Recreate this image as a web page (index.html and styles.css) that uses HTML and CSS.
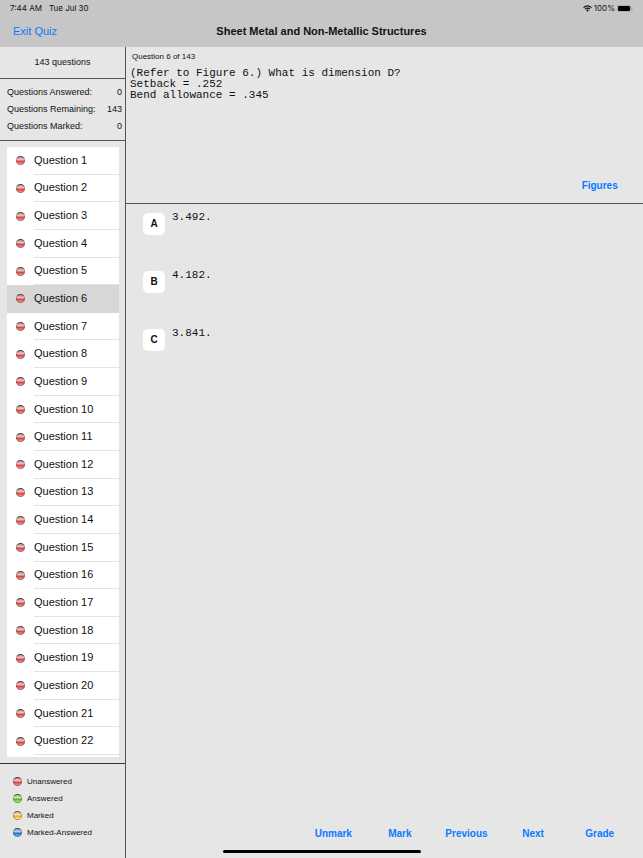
FILE: index.html
```html
<!DOCTYPE html>
<html lang="en">
<head>
<meta charset="utf-8">
<meta name="viewport" content="width=device-width, initial-scale=1">
<title>Sheet Metal and Non-Metallic Structures</title>
<link rel="stylesheet" href="styles.css">
</head>
<body>
<header class="top">
  <div class="status">
    <span>7:44 AM</span>
    <span>Tue Jul 30</span>
    <span class="status-right">
      <svg class="wifi" viewBox="0 0 18 14" aria-hidden="true"><g fill="none" stroke="#111" stroke-width="2.3"><path d="M1 5.2Q9-2 17 5.2"/><path d="M4 8.3Q9 4 14 8.3"/></g><path d="M6.2 10.4Q9 8 11.8 10.4L9 13.3Z" fill="#111"/></svg>
      <span>100%</span>
      <svg class="battery" viewBox="0 0 32 14" aria-hidden="true"><rect x=".5" y=".5" width="27" height="13" rx="4" fill="none" stroke="#888"/><rect x="2" y="2" width="24" height="10" rx="2.5" fill="#000"/><path d="M29 4.5q2 .8 2 2.5t-2 2.5z" fill="#888"/></svg>
    </span>
  </div>
  <nav class="navbar">
    <button class="exit" type="button">Exit Quiz</button>
    <h1>Sheet Metal and Non-Metallic Structures</h1>
  </nav>
</header>
<div class="body">
  <aside class="side">
    <p class="total">143 questions</p>
    <dl class="stats">
      <div><dt>Questions Answered:</dt><dd>0</dd></div>
      <div><dt>Questions Remaining:</dt><dd>143</dd></div>
      <div><dt>Questions Marked:</dt><dd>0</dd></div>
    </dl>
    <div class="list-wrap">
      <ul class="list">
        <li><i class="dot red"></i><button type="button">Question 1</button></li>
        <li><i class="dot red"></i><button type="button">Question 2</button></li>
        <li><i class="dot red"></i><button type="button">Question 3</button></li>
        <li><i class="dot red"></i><button type="button">Question 4</button></li>
        <li><i class="dot red"></i><button type="button">Question 5</button></li>
        <li class="current"><i class="dot red"></i><button type="button">Question 6</button></li>
        <li><i class="dot red"></i><button type="button">Question 7</button></li>
        <li><i class="dot red"></i><button type="button">Question 8</button></li>
        <li><i class="dot red"></i><button type="button">Question 9</button></li>
        <li><i class="dot red"></i><button type="button">Question 10</button></li>
        <li><i class="dot red"></i><button type="button">Question 11</button></li>
        <li><i class="dot red"></i><button type="button">Question 12</button></li>
        <li><i class="dot red"></i><button type="button">Question 13</button></li>
        <li><i class="dot red"></i><button type="button">Question 14</button></li>
        <li><i class="dot red"></i><button type="button">Question 15</button></li>
        <li><i class="dot red"></i><button type="button">Question 16</button></li>
        <li><i class="dot red"></i><button type="button">Question 17</button></li>
        <li><i class="dot red"></i><button type="button">Question 18</button></li>
        <li><i class="dot red"></i><button type="button">Question 19</button></li>
        <li><i class="dot red"></i><button type="button">Question 20</button></li>
        <li><i class="dot red"></i><button type="button">Question 21</button></li>
        <li><i class="dot red"></i><button type="button">Question 22</button></li>
      </ul>
    </div>
    <ul class="legend">
      <li><i class="dot red"></i>Unanswered</li>
      <li><i class="dot green"></i>Answered</li>
      <li><i class="dot amber"></i>Marked</li>
      <li><i class="dot blue"></i>Marked-Answered</li>
    </ul>
  </aside>
  <main class="main">
    <section class="prompt">
      <h2>Question 6 of 143</h2>
      <p class="text">(Refer to Figure 6.) What is dimension D?<br>Setback = .252<br>Bend allowance = .345</p>
      <div class="actions"><button class="link figures" type="button">Figures</button></div>
    </section>
    <ol class="answers">
      <li><button class="letter" type="button" aria-labelledby="key-a ans-a"><span id="key-a">A</span></button><span id="ans-a">3.492.</span></li>
      <li><button class="letter" type="button" aria-labelledby="key-b ans-b"><span id="key-b">B</span></button><span id="ans-b">4.182.</span></li>
      <li><button class="letter" type="button" aria-labelledby="key-c ans-c"><span id="key-c">C</span></button><span id="ans-c">3.841.</span></li>
    </ol>
    <div class="actions toolbar">
      <button class="link" type="button">Unmark</button>
      <button class="link" type="button">Mark</button>
      <button class="link" type="button">Previous</button>
      <button class="link" type="button">Next</button>
      <button class="link" type="button">Grade</button>
    </div>
  </main>
</div>
<div class="home-bar"></div>
</body>
</html>
```

FILE: styles.css
```css
* {
  box-sizing: border-box;
}

body {
  margin: 0;
  min-height: 100vh;
  display: flex;
  flex-direction: column;
  position: relative;
  background: #e6e6e6;
  color: #111;
  font: 9px/17px "Liberation Sans", Arial, sans-serif;
}

h1, h2, p, ul, ol, dl, dd {
  margin: 0;
  padding: 0;
  list-style: none;
}

button {
  border: 0;
  padding: 0;
  background: none;
  color: inherit;
  font: inherit;
  cursor: pointer;
}

.top {
  height: 47px;
  background: #c6c6c6;
}

.status {
  display: flex;
  gap: 7px;
  padding: 0 10px;
  height: 16px;
  font-family: Inter, "Liberation Sans", sans-serif;
  font-size: 8px;
  line-height: 16px;
}

.status-right {
  display: flex;
  align-items: center;
  gap: 2px;
  margin-left: auto;
}

.wifi {
  width: 9px;
  height: 7px;
}

.battery {
  width: 16px;
  height: 7px;
}

.navbar {
  display: grid;
  grid-template-columns: 1fr auto 1fr;
  align-items: center;
  height: 31px;
  padding: 0 13px;
}

.exit {
  justify-self: start;
  color: #0a7aff;
  font-size: 11px;
}

.navbar h1 {
  font-size: 11px;
  font-weight: 700;
}

.body {
  flex: 1;
  display: grid;
  grid-template-columns: 126px 1fr;
}

.side {
  display: flex;
  flex-direction: column;
  border-right: 1px solid #555;
}

.total {
  height: 32px;
  line-height: 31px;
  text-align: center;
  border-bottom: 1px solid #555;
}

.stats {
  padding: 5px 3px 5px 7px;
  border-bottom: 1px solid #555;
}

.stats div {
  display: flex;
  justify-content: space-between;
}

.list-wrap {
  flex: 1;
  display: flex;
  padding: 6px 6px 6px 7px;
}

.list {
  flex: 1;
  display: grid;
  grid-auto-rows: minmax(26px, 1fr);
  padding-bottom: 2px;
  background: #fff;
}

.list li {
  display: flex;
  align-items: center;
  gap: 9px;
  padding-left: 9px;
}

.list button {
  flex: 1;
  align-self: stretch;
  border-bottom: 1px solid #e4e4e4;
  text-align: left;
  font-size: 11px;
}

.list .current {
  background: #d7d7d7;
}

.list .current button {
  border-color: transparent;
}

.dot {
  flex: none;
  width: 9px;
  height: 9px;
  border: 1px solid #0004;
  border-top-color: #0009;
  border-radius: 50%;
}

.red {
  background: linear-gradient(#b99 0, #f0c0c0 40%, #d84444 60%, #f88 100%);
}

.green {
  background: linear-gradient(#9b9 0, #cdf0bd 40%, #55b028 60%, #9f6 100%);
}

.amber {
  background: linear-gradient(#cb9 0, #fbe0b0 40%, #f0a028 60%, #ff7 100%);
}

.blue {
  background: linear-gradient(#9ac 0, #b5ccf2 40%, #2e68cc 60%, #6bf 100%);
}

.legend {
  padding: 9px 0 17px 13px;
  border-top: 1px solid #333;
  font-size: 8px;
}

.legend li {
  display: flex;
  align-items: center;
  gap: 5px;
}

.main {
  display: flex;
  flex-direction: column;
}

.prompt {
  display: flex;
  flex-direction: column;
  min-height: 157px;
  padding-bottom: 9px;
  border-bottom: 1px solid #555;
}

.prompt h2 {
  padding: 1px 6px 3px;
  font-size: 8px;
  font-weight: 400;
}

.text {
  padding: 0 4px;
  font: 11px/11px "Liberation Mono", "Courier New", monospace;
}

.link {
  color: #0a7aff;
  font-size: 10px;
  font-weight: 700;
}

.actions {
  display: grid;
  grid-template-columns: repeat(5, 1fr);
  width: 333px;
  margin: auto 10px 0 auto;
}

.figures {
  grid-column: 5;
}

.answers {
  display: grid;
  grid-auto-rows: 58px;
  padding: 8px 17px;
}

.answers li {
  display: flex;
  align-items: flex-start;
  gap: 7px;
  font: 11px/11px "Liberation Mono", "Courier New", monospace;
}

.letter {
  width: 22px;
  height: 22px;
  margin-top: 1px;
  border-radius: 5px;
  background: #fff;
  font: 700 10px/22px "Liberation Sans", Arial, sans-serif;
}

.toolbar {
  padding-bottom: 16px;
}

.home-bar {
  position: absolute;
  bottom: 5px;
  left: 50%;
  width: 198px;
  height: 3px;
  border-radius: 2px;
  background: #000;
  transform: translateX(-50%);
}
```
